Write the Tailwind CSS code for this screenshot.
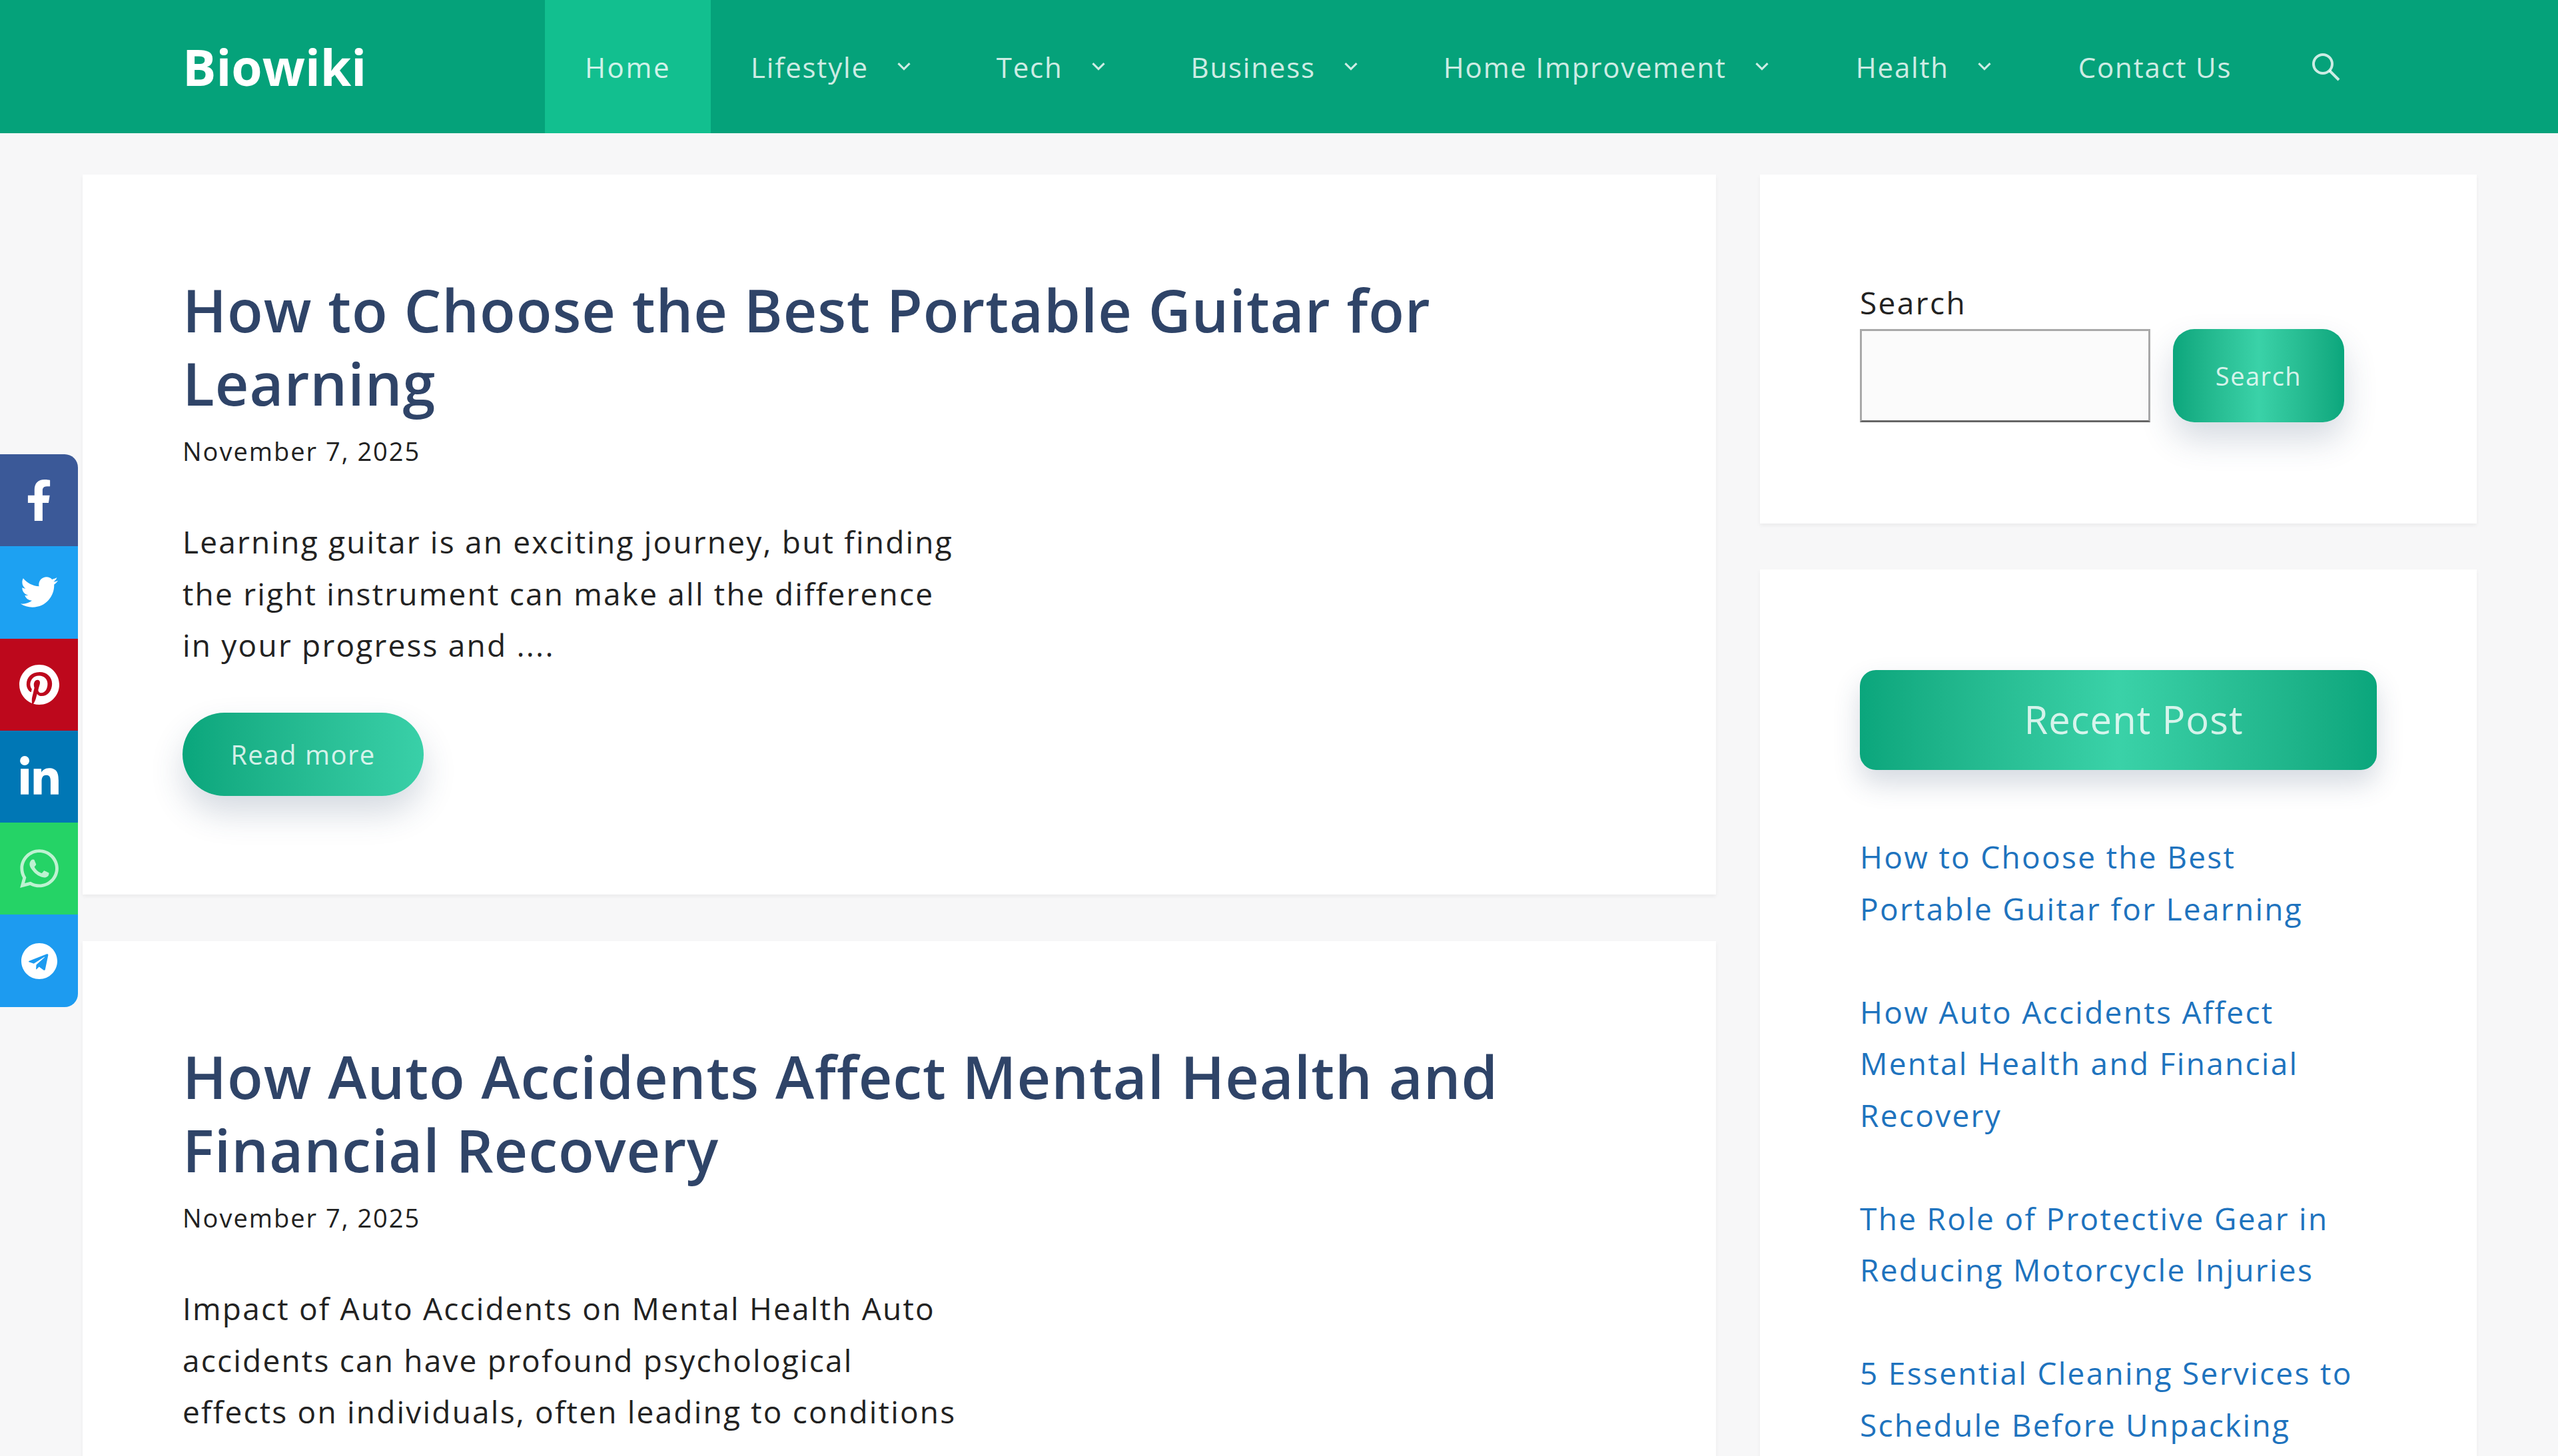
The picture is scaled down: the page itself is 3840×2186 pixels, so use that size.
<!DOCTYPE html>
<html lang="en">

<head>
    <meta charset="UTF-8">
    <meta name="viewport" content="width=device-width, initial-scale=1.0">
    <script src="https://cdn.jsdelivr.net/npm/@tailwindcss/browser@4"></script>
    <title>Biowiki</title>
</head>

<body class="h-[2186px] overflow-hidden bg-[#f7f7f8] font-['Open_Sans',sans-serif] text-[#222222]">
    <!-- top nav -->
    <header class="flex h-[200px] items-stretch bg-[#05a27a] pl-[274px] text-[42px] tracking-[1.8px] text-white/80">
        <a href="#" class="flex w-[544px] items-center text-[75px] font-bold tracking-normal text-white">Biowiki</a>
        <nav class="flex items-stretch">
            <a href="#" class="flex items-center bg-[#12bf8f] px-[60px] tracking-[2.6px]">Home</a>
            <a href="#" class="flex items-center pl-[60px] pr-[68px]">Lifestyle
                <svg class="ml-[42px] h-[22px] w-[22px]" viewBox="0 0 18 18" fill="none" stroke="currentColor" stroke-width="2.5"><path d="M2 5l7 7 7-7" /></svg>
            </a>
            <a href="#" class="flex items-center pl-[60px] pr-[68px]">Tech
                <svg class="ml-[42px] h-[22px] w-[22px]" viewBox="0 0 18 18" fill="none" stroke="currentColor" stroke-width="2.5"><path d="M2 5l7 7 7-7" /></svg>
            </a>
            <a href="#" class="flex items-center pl-[60px] pr-[68px]">Business
                <svg class="ml-[42px] h-[22px] w-[22px]" viewBox="0 0 18 18" fill="none" stroke="currentColor" stroke-width="2.5"><path d="M2 5l7 7 7-7" /></svg>
            </a>
            <a href="#" class="flex items-center pl-[60px] pr-[70px]">Home Improvement
                <svg class="ml-[42px] h-[22px] w-[22px]" viewBox="0 0 18 18" fill="none" stroke="currentColor" stroke-width="2.5"><path d="M2 5l7 7 7-7" /></svg>
            </a>
            <a href="#" class="flex items-center pl-[60px] pr-[70px]">Health
                <svg class="ml-[42px] h-[22px] w-[22px]" viewBox="0 0 18 18" fill="none" stroke="currentColor" stroke-width="2.5"><path d="M2 5l7 7 7-7" /></svg>
            </a>
            <a href="#" class="flex items-center px-[60px]">Contact Us</a>
            <a href="#" class="flex items-center pl-[58px]">
                <svg class="h-[46px] w-[46px]" viewBox="0 0 46 46" fill="none" stroke="currentColor" stroke-width="4"><circle cx="19" cy="19" r="14" /><path d="M29 29l14 14" /></svg>
            </a>
        </nav>
    </header>

    <!-- share bar -->
    <div class="fixed left-0 top-[682px] flex w-[117px] flex-col overflow-hidden rounded-r-[20px] text-white">
        <a href="#" class="flex h-[138.3px] items-center justify-center bg-[#3b5998]"><svg class="h-[62px] w-[39px]" viewBox="0 0 320 512" fill="currentColor"><path d="M279.14 288l14.22-92.66h-88.91v-60.13c0-25.35 12.42-50.06 52.24-50.06h40.42V6.26S260.43 0 225.36 0c-73.22 0-121.08 44.38-121.08 124.72v70.62H22.89V288h81.39v224h100.17V288z" /></svg></a>
        <a href="#" class="flex h-[138.3px] items-center justify-center bg-[#1da1f2]"><svg class="h-[56px] w-[56px]" viewBox="0 0 512 512" fill="currentColor"><path d="M459.37 151.716c.325 4.548.325 9.097.325 13.645 0 138.72-105.583 298.558-298.558 298.558-59.452 0-114.68-17.219-161.137-47.106 8.447.974 16.568 1.299 25.34 1.299 49.055 0 94.213-16.568 130.274-44.832-46.132-.975-84.792-31.188-98.112-72.772 6.498.974 12.995 1.624 19.818 1.624 9.421 0 18.843-1.3 27.614-3.573-48.081-9.747-84.143-51.98-84.143-102.985v-1.299c13.969 7.797 30.214 12.67 47.431 13.319-28.264-18.843-46.781-51.005-46.781-87.391 0-19.492 5.197-37.36 14.294-52.954 51.655 63.675 129.3 105.258 216.365 109.807-1.624-7.797-2.599-15.918-2.599-24.04 0-57.828 46.782-104.934 104.934-104.934 30.213 0 57.502 12.67 76.67 33.137 23.715-4.548 46.456-13.32 66.599-25.34-7.798 24.366-24.366 44.833-46.132 57.827 21.117-2.273 41.584-8.122 60.426-16.243-14.292 20.791-32.161 39.308-52.628 54.253z" /></svg></a>
        <a href="#" class="flex h-[138.3px] items-center justify-center bg-[#bd081c]"><svg class="h-[62px] w-[60px]" viewBox="0 0 496 512" fill="currentColor"><path d="M496 256c0 137-111 248-248 248-25.6 0-50.2-3.9-73.4-11.1 10.1-16.5 25.2-43.5 30.8-65 3-11.6 15.4-59 15.4-59 8.1 15.4 31.7 28.5 56.8 28.5 74.8 0 128.7-68.8 128.7-154.3 0-81.9-66.9-143.2-152.9-143.2-107 0-163.9 71.8-163.9 150.1 0 36.4 19.4 81.7 50.3 96.1 4.7 2.2 7.2 1.2 8.3-3.3.8-3.4 5-20.3 6.9-28.1.6-2.5.3-4.7-1.7-7.1-10.1-12.5-18.3-35.3-18.3-56.6 0-54.7 41.4-107.6 112-107.6 60.9 0 103.6 41.5 103.6 100.9 0 67.1-33.9 113.6-78 113.6-24.3 0-42.6-20.1-36.7-44.8 7-29.5 20.5-61.3 20.5-82.6 0-19-10.2-34.9-31.4-34.9-24.9 0-44.9 25.7-44.9 60.2 0 22 7.4 36.8 7.4 36.8s-24.5 103.8-29 123.2c-5 21.4-3 51.6-.9 71.2C65.4 450.9 0 361.1 0 256 0 119 111 8 248 8s248 111 248 248z" /></svg></a>
        <a href="#" class="flex h-[138.3px] items-center justify-center bg-[#0077b5]"><svg class="mt-[4px] h-[66px] w-[58px]" viewBox="0 0 448 512" fill="currentColor"><path d="M100.28 448H7.4V148.9h92.88zM53.79 108.1C24.09 108.1 0 83.5 0 53.8a53.79 53.79 0 0 1 107.58 0c0 29.7-24.1 54.3-53.79 54.3zM447.9 448h-92.68V302.4c0-34.7-.7-79.2-48.29-79.2-48.29 0-55.69 37.7-55.69 76.7V448h-92.78V148.9h89.08v40.8h1.3c12.4-23.5 42.69-48.3 87.88-48.3 94 0 111.28 61.9 111.28 142.3V448z" /></svg></a>
        <a href="#" class="flex h-[138.3px] items-center justify-center bg-[#25d366] text-white/70"><svg class="h-[66px] w-[58px]" viewBox="0 0 448 512" fill="currentColor"><path d="M380.9 97.1C339 55.1 283.2 32 223.9 32c-122.4 0-222 99.6-222 222 0 39.1 10.2 77.3 29.6 111L0 480l117.7-30.9c32.4 17.7 68.9 27 106.1 27h.1c122.3 0 224.1-99.6 224.1-222 0-59.3-25.2-115-67.1-157zm-157 341.6c-33.2 0-65.7-8.9-94-25.7l-6.7-4-69.8 18.3L72 359.2l-4.4-7c-18.5-29.4-28.2-63.3-28.2-98.2 0-101.7 82.8-184.5 184.6-184.5 49.3 0 95.6 19.2 130.4 54.1 34.8 34.9 56.2 81.2 56.1 130.5 0 101.8-84.9 184.6-186.6 184.6zm101.2-138.2c-5.5-2.8-32.8-16.2-37.9-18-5.1-1.9-8.8-2.8-12.5 2.8-3.7 5.6-14.3 18-17.6 21.8-3.2 3.7-6.5 4.2-12 1.4-32.6-16.3-54-29.1-75.5-66-5.7-9.8 5.7-9.1 16.3-30.3 1.8-3.7.9-6.9-.5-9.7-1.4-2.8-12.5-30.1-17.1-41.2-4.5-10.8-9.1-9.3-12.5-9.5-3.2-.2-6.9-.2-10.6-.2-3.7 0-9.7 1.4-14.8 6.9-5.1 5.6-19.4 19-19.4 46.3 0 27.3 19.9 53.7 22.6 57.4 2.8 3.7 39.1 59.7 94.8 83.8 35.2 15.2 49 16.5 66.6 13.9 10.7-1.6 32.8-13.4 37.4-26.4 4.6-13 4.6-24.1 3.2-26.4-1.3-2.5-5-3.9-10.5-6.6z" /></svg></a>
        <a href="#" class="flex h-[138.3px] items-center justify-center bg-[#1d9bf0]"><svg class="h-[56px] w-[54px]" viewBox="0 0 496 512" fill="currentColor"><path d="M248 8C111 8 0 119 0 256s111 248 248 248 248-111 248-248S385 8 248 8zm121.8 169.9l-40.7 191.8c-3 13.6-11.1 16.9-22.4 10.5l-62-45.7-29.9 28.8c-3.3 3.3-6.1 6.1-12.5 6.1l4.4-63.1 114.9-103.8c5-4.4-1.1-6.9-7.7-2.5l-142 89.4-61.2-19.1c-13.3-4.2-13.6-13.3 2.8-19.7l239.1-92.2c11.1-4 20.8 2.7 17.2 19.5z" /></svg></a>
    </div>

    <div class="flex gap-[66px] pl-[124px] pt-[62px]">
        <!-- posts -->
        <main class="flex w-[2452px] flex-col gap-[70px]">
            <article class="h-[1081px] bg-white px-[150px] pt-[148px] shadow-[0_3px_6px_rgba(0,0,0,0.05)]">
                <h2 class="text-[88px] font-semibold leading-[110px] tracking-[0.95px] text-[#2f4468]">How to Choose the Best Portable Guitar for Learning</h2>
                <p class="flex h-[94px] items-center pt-[1px] text-[38px] tracking-[2px]">November 7, 2025</p>
                <p class="mt-[51px] h-[231px] w-[1172px] text-[46px] leading-[77.5px] tracking-[2.2px]">Learning guitar is an exciting journey, but finding the right instrument can make all the difference in your progress and ....</p>
                <a href="#" class="mt-[64px] flex h-[125px] w-[362px] items-center justify-center rounded-full bg-linear-to-r from-[#09a67c] to-[#39d0a8] text-[40px] tracking-[1.5px] text-white/80 shadow-[0_25px_50px_rgba(47,68,104,0.2)]">Read more</a>
            </article>
            <article class="h-[1081px] bg-white px-[150px] pt-[148px] shadow-[0_3px_6px_rgba(0,0,0,0.05)]">
                <h2 class="text-[88px] font-semibold leading-[110px] tracking-[0.95px] text-[#2f4468]">How Auto Accidents Affect Mental Health and Financial Recovery</h2>
                <p class="flex h-[94px] items-center pt-[1px] text-[38px] tracking-[2px]">November 7, 2025</p>
                <p class="mt-[51px] w-[1172px] text-[46px] leading-[77.5px] tracking-[2.2px]">Impact of Auto Accidents on Mental Health Auto accidents can have profound psychological effects on individuals, often leading to conditions</p>
            </article>
        </main>

        <!-- sidebar -->
        <aside class="flex w-[1076px] flex-col gap-[69px]">
            <section class="h-[524px] bg-white px-[150px] pt-[153px] shadow-[0_3px_6px_rgba(0,0,0,0.05)]">
                <label class="block text-[46px] leading-[79px] tracking-[2.4px]">Search</label>
                <div class="flex gap-[34px]">
                    <input type="text" class="h-[140px] w-[436px] border-[3px] border-[#a9a9a9] border-b-[#666666] bg-[#fbfbfb]">
                    <button class="h-[140px] w-[257px] rounded-[32px] bg-linear-to-r from-[#0aa67c] via-[#3ad2a8] to-[#0aa67c] text-[38px] tracking-[1.5px] text-white/80 shadow-[0_25px_50px_rgba(47,68,104,0.2)]">Search</button>
                </div>
            </section>
            <section class="h-[1400px] bg-white px-[150px] pt-[151px] shadow-[0_3px_6px_rgba(0,0,0,0.05)]">
                <h3 class="flex h-[150px] w-[776px] items-center justify-center rounded-[24px] bg-linear-to-r from-[#0aa67c] via-[#3ad2a8] to-[#0aa67c] pb-[4px] pl-[46px] text-[58px] tracking-[1px] text-white/80 shadow-[0_20px_40px_rgba(47,68,104,0.2)]">Recent Post</h3>
                <ul class="mt-[92px] flex flex-col gap-[77.5px] pr-[20px] text-[46px] leading-[77.5px] tracking-[2.3px] text-[#1e73be]">
                    <li>How to Choose the Best Portable Guitar for Learning</li>
                    <li>How Auto Accidents Affect Mental Health and Financial Recovery</li>
                    <li>The Role of Protective Gear in Reducing Motorcycle Injuries</li>
                    <li>5 Essential Cleaning Services to Schedule Before Unpacking</li>
                </ul>
            </section>
        </aside>
    </div>
</body>

</html>
